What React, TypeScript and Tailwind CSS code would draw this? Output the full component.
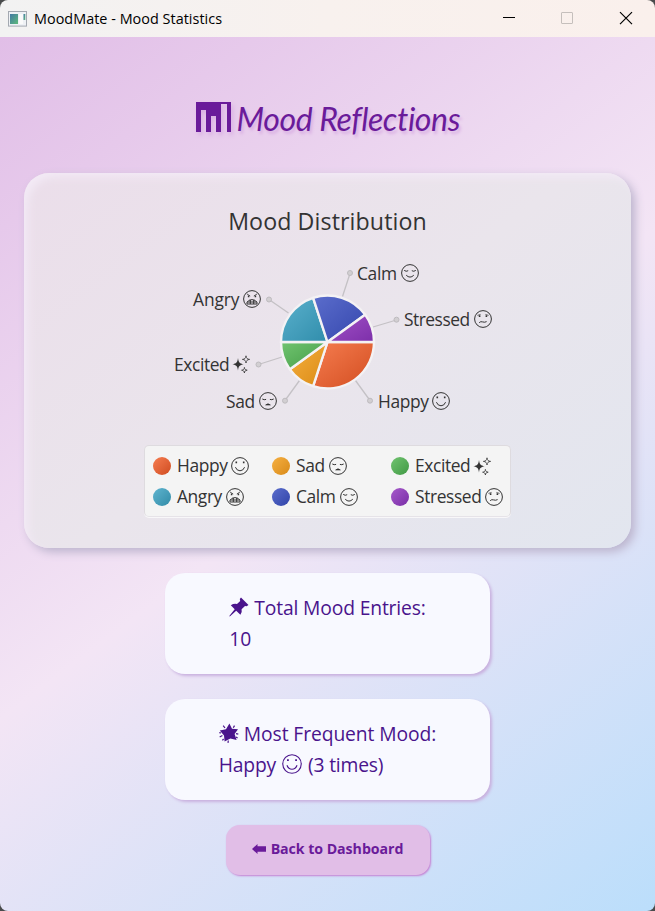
import type { ReactNode } from 'react'

type Mood = 'happy' | 'sad' | 'angry' | 'calm' | 'stressed' | 'excited'

function MoodGlyph({ mood, className = 'size-5' }: { mood: Mood; className?: string }) {
  if (mood === 'excited') {
    return (
      <svg viewBox="0 0 20 20" className={`shrink-0 ${className}`} fill="currentColor">
        <path d="M6 4C6.6 8.3 7.6 9.6 11.6 10.3C7.6 11 6.6 12.3 6 16.6C5.4 12.3 4.4 11 .4 10.3C4.4 9.6 5.4 8.3 6 4Z" />
        <path d="M14 1.8C14.3 4.3 15.1 5.1 17.6 5.4C15.1 5.7 14.3 6.5 14 9C13.7 6.5 12.9 5.7 10.4 5.4C12.9 5.1 13.7 4.3 14 1.8Z" fill="none" stroke="currentColor" strokeWidth=".8" />
        <path d="M12.4 13.4C12.6 15.3 13.2 15.9 15.2 16.2C13.2 16.5 12.6 17.1 12.4 19C12.2 17.1 11.6 16.5 9.6 16.2C11.6 15.9 12.2 15.3 12.4 13.4Z" fill="none" stroke="currentColor" strokeWidth=".8" />
      </svg>
    )
  }
  return (
    <svg viewBox="0 0 20 20" className={`shrink-0 ${className}`} fill="none" stroke="currentColor" strokeWidth="1">
      <circle cx="10" cy="10" r="8.4" />
      {mood === 'happy' && (
        <>
          <path d="M5.4 11.2Q6.8 14.8 10 14.8T14.6 11.2" />
          <path d="M6.3 5.6v1.7M13.7 5.6v1.7" strokeWidth="1.6" />
        </>
      )}
      {mood === 'calm' && <path d="M4.2 7.4Q6.2 9 8.2 7.7M11.8 7.7Q13.8 9 15.8 7.4M6.2 12.2Q10 16 13.8 12.2" />}
      {mood === 'sad' && (
        <>
          <path d="M4.3 8Q6.2 9.2 8.1 8.4M11.9 8.4Q13.8 9.2 15.7 8" />
          <path d="M7.6 14Q10 11.6 12.4 14Z" fill="currentColor" strokeWidth=".6" />
        </>
      )}
      {mood === 'stressed' && (
        <>
          <path d="M6.2 13.7Q7.6 12.1 9.6 12.9T13.6 12.6" />
          <path d="M6.6 6.2v1.8M13.4 6.2v1.8" strokeWidth="1.6" />
          <path d="M4.4 6.4L7.6 5.4M12.4 5.4L15.6 6.4" strokeWidth=".7" />
        </>
      )}
      {mood === 'angry' && (
        <>
          <path d="M5 15V13.3Q6.5 10.6 10 10.6T15 13.3V15ZM5 13H15M8.3 11V15M11.7 11V15" />
          <path d="M5 5L8.2 7M15 5L11.8 7" strokeWidth=".8" />
          <path d="M6.6 6.4v1.8M13.4 6.4v1.8" strokeWidth="1.5" />
        </>
      )}
    </svg>
  )
}

function AppIcon() {
  return (
    <svg className="h-4 w-[19px]" viewBox="0 0 19 16">
      <rect x=".5" y=".5" width="18" height="14.6" fill="#eef1f5" stroke="#a4a9b1" />
      <defs>
        <linearGradient id="app" x1="0" y1="0" x2="1" y2="1">
          <stop stopColor="#4279a4" />
          <stop offset="1" stopColor="#5dba7b" />
        </linearGradient>
      </defs>
      <rect x="2" y="3" width="8" height="10" fill="url(#app)" />
      <rect x="11" y="3" width="4" height="10" fill="#fafafa" />
      <rect x="15.5" y="3" width="1.8" height="6" fill="url(#app)" />
    </svg>
  )
}

function TitleBar() {
  return (
    <header className="flex h-[37px] shrink-0 items-center rounded-t-lg bg-linear-to-r from-[#f2f2f2] via-[#f8f1ee] to-[#faf0ec] pl-2 text-black">
      <AppIcon />
      <span className="ml-[7px] flex-1 text-[14.4px] tracking-[0.03px] whitespace-nowrap">MoodMate - Mood Statistics</span>
      <svg className="h-[37px] w-[155px]" viewBox="500 0 155 37" fill="none">
        <path d="M503 17.5h12" stroke="#000" />
        <rect x="561.5" y="12.5" width="11" height="11" rx=".5" stroke="#c5bfbc" />
        <path d="M620 12.2l12 12M632 12.2l-12 12" stroke="#000" strokeWidth="1.2" />
      </svg>
    </header>
  )
}

interface Slice {
  mood: Mood
  name: string
  from: number
  to: number
  light: string
  dark: string
}

// Angles are in degrees, clockwise from three o'clock.
const slices: Slice[] = [
  { mood: 'happy', name: 'Happy', from: 0, to: 108, light: '#f67d50', dark: '#d24d20' },
  { mood: 'sad', name: 'Sad', from: 108, to: 144, light: '#f6b040', dark: '#da8a14' },
  { mood: 'excited', name: 'Excited', from: 144, to: 180, light: '#71c470', dark: '#429b45' },
  { mood: 'angry', name: 'Angry', from: 180, to: 252, light: '#5bb1cd', dark: '#308dab' },
  { mood: 'calm', name: 'Calm', from: 252, to: 324, light: '#5b6dcc', dark: '#3446ac' },
  { mood: 'stressed', name: 'Stressed', from: 324, to: 360, light: '#a352c8', dark: '#7c2fa9' },
]

const callouts = [
  'M288.5 313L269 299.5',
  'M342.5 296.5L350 273.5',
  'M373 327L396.5 320',
  'M282 357L258.5 364.5',
  'M299.5 380.5L285 400.5',
  'M355.5 380.5L370 400.5',
]
const anchors = [[269, 299.5], [350, 273], [396.5, 319.7], [258.5, 364.5], [285, 400.7], [370, 400.7]]

function point(angle: number) {
  const a = (angle * Math.PI) / 180
  return `${327.5 + 46.5 * Math.cos(a)} ${342 + 46.5 * Math.sin(a)}`
}

function ChartLabel({ mood, name, className }: { mood: Mood; name: string; className: string }) {
  return (
    <span className={`absolute flex items-center gap-[3px] text-[17.4px] leading-6 whitespace-nowrap ${className}`}>
      {name}
      <MoodGlyph mood={mood} />
    </span>
  )
}

function Pie() {
  return (
    <div className="relative h-[160px] w-[340px]">
      <svg className="h-[160px] w-[340px]" viewBox="164 260 340 160">
        <defs>
          {slices.map((s) => (
            <linearGradient key={s.mood} id={s.mood} x1="0" y1="0" x2="1" y2="1">
              <stop stopColor={s.light} />
              <stop offset="1" stopColor={s.dark} />
            </linearGradient>
          ))}
        </defs>
        {callouts.map((d) => (
          <path key={d} d={d} stroke="#c4c1c5" strokeWidth="1.3" />
        ))}
        {anchors.map(([x, y]) => (
          <circle key={x} cx={x} cy={y} r="2.5" fill="#d2cfd2" stroke="#bebbbf" />
        ))}
        {slices.map((s) => (
          <path
            key={s.mood}
            d={`M327.5 342L${point(s.from)}A46.5 46.5 0 0 1 ${point(s.to)}Z`}
            fill={`url(#${s.mood})`}
            stroke="#f4f2f4"
            strokeWidth="2.4"
            strokeLinejoin="round"
          />
        ))}
      </svg>
      <ChartLabel mood="calm" name="Calm" className="top-[1px] left-[193px] tracking-[-0.35px]" />
      <ChartLabel mood="angry" name="Angry" className="top-[27px] left-[29px] tracking-[-0.1px]" />
      <ChartLabel mood="stressed" name="Stressed" className="top-[47px] left-[240px] tracking-[-0.5px]" />
      <ChartLabel mood="excited" name="Excited" className="top-[92px] left-[10px] tracking-[-0.4px]" />
      <ChartLabel mood="sad" name="Sad" className="top-[129px] left-[62px] tracking-[-0.4px]" />
      <ChartLabel mood="happy" name="Happy" className="top-[129px] left-[214px] tracking-[-0.4px]" />
    </div>
  )
}

const legend: [Mood, string, string][] = [
  ['happy', 'Happy', 'from-[#f67d50] to-[#cf4b1f]'],
  ['sad', 'Sad', 'from-[#f6b040] to-[#d88a16]'],
  ['excited', 'Excited', 'from-[#71c470] to-[#409944]'],
  ['angry', 'Angry', 'from-[#5fb5d0] to-[#308ba7]'],
  ['calm', 'Calm', 'from-[#5b6dcc] to-[#3144a9]'],
  ['stressed', 'Stressed', 'from-[#a75acb] to-[#792ca6]'],
]

function Legend() {
  return (
    <div className="grid h-[72px] w-[367px] grid-cols-[119px_119px_1fr] grid-rows-[31px_31px] rounded-[5px] border border-[#dedbdf] border-b-[#e6e3e8] bg-[#f4f4f4] pt-[4px] pl-[8px] shadow-[0_1px_0_#f8f7f9]">
      {legend.map(([mood, name, dot]) => (
        <div key={mood} className="flex items-center text-[17.4px] tracking-[-0.4px]">
          <span className={`mr-[6px] size-[18px] shrink-0 rounded-full bg-linear-135 ${dot}`} />
          {name}
          <MoodGlyph mood={mood} className="ml-[3px] size-5" />
        </div>
      ))}
    </div>
  )
}

function StatCard({ children }: { children: ReactNode }) {
  return (
    <section className="flex h-[101px] w-[325px] shrink-0 flex-col items-center justify-center rounded-[20px] bg-[#f8f9ff] pb-[2px] text-[19.3px] leading-[31px] text-[#4a148c] shadow-[2px_2px_3px_#c9b1df]">
      <div className="whitespace-nowrap">{children}</div>
    </section>
  )
}

function Pushpin() {
  return (
    <svg className="mr-[5px] h-5 w-5" viewBox="0 0 20 20" fill="currentColor">
      <path d="M12 .5L19.5 8L17.6 9.3L16 9L12.6 12.3Q13.4 15.5 11.4 17.8L7.2 13.7L.8 19.5L.3 19L5.7 12.2L1.8 8.3Q5 6.3 8 7.1L11.2 4L10.8 2Z" />
    </svg>
  )
}

function GlowingStar() {
  return (
    <svg className="mr-[5px] h-5 w-5" viewBox="0 0 20 20" fill="currentColor">
      <path d="M10.4 .5L13 5.8L19 6.2L15.6 11L17.6 17L11.4 15.6L5.6 18.6L5 12.4L.8 7.6L7 6.2Z" />
      <path d="M4.2 2.6L6 5M15.5 2.6L14.3 4.8M19.3 11.2L17 10.7M.7 14L3.4 12.5M9 19.8L9.3 17.5M18.6 15L17 14M.3 9.6L2 10M3.4 17.4L4.6 16" stroke="currentColor" strokeWidth="1.2" />
    </svg>
  )
}

export default function App() {
  return (
    <div className="h-[911px] w-[655px] overflow-hidden bg-[#494b4c] font-['Open_Sans','Noto_Sans',sans-serif]">
      <div className="flex h-full flex-col">
        <TitleBar />
        <main className="flex flex-1 flex-col items-center rounded-b-lg bg-[linear-gradient(143.15deg,#e1bee7,#f3e5f5_50%,#bbdefb)]">
          <h1 className="mt-[56px] flex h-[52px] items-center text-[#6a1b9a]">
            <svg className="mr-[6px] mb-[4px] h-[30px] w-[35px] drop-shadow-[2px_3px_2px_#d9b0e3]" viewBox="0 0 35 30">
              <path fill="currentColor" fillRule="evenodd" d="M0 0H35V30H31V2H25V30H20V14H15V30H10V8H5V30H0Z" />
            </svg>
            <span className="w-[223px] text-[32px] leading-[52px] font-normal tracking-[-0.4px] whitespace-nowrap italic [font-family:Lato,sans-serif] [text-shadow:2px_3px_3px_#d9b0e3]">
              Mood Reflections
            </span>
          </h1>
          <section className="mt-[28px] flex h-[375px] w-[607px] flex-col items-center rounded-[25px] bg-[linear-gradient(143deg,#ebdeea,#eae5ec_50%,#e2e6ef)] text-[#333] shadow-[4px_4px_10px_#bcb4cd,inset_6px_6px_8px_-2px_#f3eaf6]">
            <h2 className="mt-[31px] h-[34px] text-[23.2px] leading-[34px] tracking-[0.1px]">Mood Distribution</h2>
            <div className="mt-[22px] ml-[13px]">
              <Pie />
            </div>
            <div className="mt-[25px]">
              <Legend />
            </div>
          </section>
          <div className="mt-[25px]">
            <StatCard>
              <div className="flex items-center tracking-[-0.15px]"><Pushpin />Total Mood Entries:</div>
              <div>10</div>
            </StatCard>
          </div>
          <div className="mt-[25px]">
            <StatCard>
              <div className="flex items-center tracking-[-0.1px]"><GlowingStar />Most Frequent Mood:</div>
              <div className="flex items-center tracking-[-0.2px]">
                Happy
                <MoodGlyph mood="happy" className="mx-[5px] size-[22px]" />
                (3 times)
              </div>
            </StatCard>
          </div>
          <button className="mt-[25px] flex h-[50px] w-[204px] items-center justify-center rounded-[14px] bg-[#e1bee7] pb-[3px] text-[14.2px] font-bold tracking-[-0.06px] text-[#6a1b9a] shadow-[1px_1px_2px_#c57fd2]">
            <svg className="mr-[5px] h-[10px] w-[14px]" viewBox="0 0 14 10" fill="currentColor">
              <path d="M0 5L5.5 0V2.3H14V7.7H5.5V10Z" />
            </svg>
            Back to Dashboard
          </button>
        </main>
      </div>
    </div>
  )
}
